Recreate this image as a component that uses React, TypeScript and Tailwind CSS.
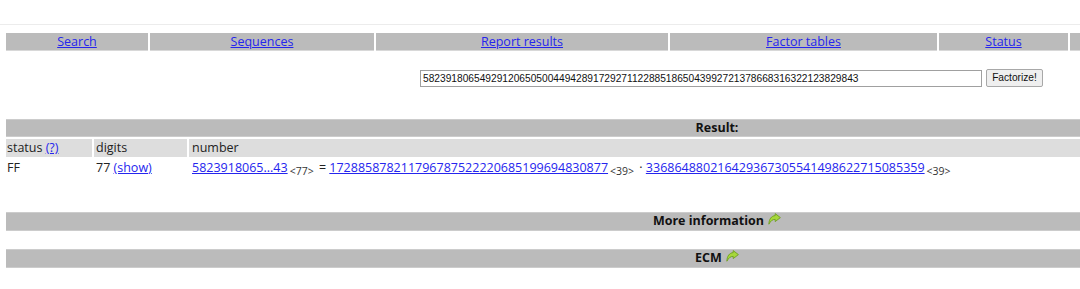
import React from "react";

const font = { fontFamily: '"Open Sans", "Noto Sans", sans-serif' };
const arial = { fontFamily: '"Liberation Sans", Arial, sans-serif' };

function Arrow() {
  return (
    <svg width="13" height="13" viewBox="0 0 13 13" className="inline-block ml-[4px] -mt-[4px] align-middle">
      <path
        d="M7.2 0.6 L12.4 4.6 L7.2 8.6 V6.4 C4.6 6.3 2.6 7.8 0.9 11.2 C0.9 6.2 3.4 2.9 7.2 2.6 Z"
        fill="#a6d83a"
        stroke="#6f9e22"
        strokeWidth="0.9"
        strokeLinejoin="round"
      />
    </svg>
  );
}

const navItems: [string, number][] = [
  ["Search", 142],
  ["Sequences", 224],
  ["Report results", 292],
  ["Factor tables", 267],
  ["Status", 129],
];

function Sub({ children }: { children: React.ReactNode }) {
  return <span className="text-[10.5px] relative top-[4px] text-[#333] mx-[2px]">{children}</span>;
}

export default function App() {
  return (
    <div className="w-[1080px] h-[289px] overflow-hidden bg-white" style={font}>
      <div className="w-[1434px]">
        <div className="h-[25px] border-b border-[#ececec]" />
        <div className="px-[6px] pt-[8px]">
          <div className="flex gap-[2px] h-[18px]">
            {navItems.map(([label, w]) => (
              <div
                key={label}
                className="bg-[#bbbbbb] border-b border-[#d8d8d8] flex items-center justify-center text-[12.5px] leading-[17px] shrink-0"
                style={{ width: w }}
              >
                <a href="#" className="text-[#2525ee] underline">
                  {label}
                </a>
              </div>
            ))}
            <div className="flex-1 bg-[#bbbbbb] border-b border-[#d8d8d8]" />
          </div>

          <div className="flex items-center pl-[414px] mt-[18px] gap-[4px]" style={arial}>
            <div className="w-[562px] h-[17px] border border-[#a0a0a0] bg-white text-[10.2px] leading-[15px] pl-[2px] text-[#111] overflow-hidden whitespace-nowrap">
              58239180654929120650500449428917292711228851865043992721378668316322123829843
            </div>
            <div className="w-[57px] h-[18px] border border-[#a8a8a8] rounded-[2px] bg-[#efefef] text-[10.2px] flex items-center justify-center text-[#111]">
              Factorize!
            </div>
          </div>

          <div className="mt-[32px] flex flex-col gap-[2px] text-[12.5px] text-[#222]">
            <div className="h-[18px] bg-[#bbbbbb] border-y border-[#cccccc] flex items-center justify-center font-bold text-[#111]">
              Result:
            </div>
            <div className="flex gap-[2px] h-[18px]">
              <div className="w-[86px] bg-[#dddddd] flex items-center pl-[1px]">
                status&nbsp;<a href="#" className="text-[#2525ee] underline">(?)</a>
              </div>
              <div className="w-[93px] bg-[#dddddd] flex items-center pl-[2px]">digits</div>
              <div className="flex-1 bg-[#dddddd] flex items-center pl-[3px]">number</div>
            </div>
            <div className="flex gap-[2px] h-[18px] whitespace-nowrap">
              <div className="w-[86px] flex items-center pl-[1px]">FF</div>
              <div className="w-[93px] flex items-center pl-[2px]">
                77&nbsp;<a href="#" className="text-[#2525ee] underline">(show)</a>
              </div>
              <div className="flex-1 flex items-center pl-[3px]">
                <a href="#" className="text-[#2525ee] underline">5823918065...43</a>
                <Sub>&lt;77&gt;</Sub>
                &nbsp;=&nbsp;
                <a href="#" className="text-[#2525ee] underline">172885878211796787522220685199694830877</a>
                <Sub>&lt;39&gt;</Sub>
                &nbsp;·&nbsp;
                <a href="#" className="text-[#2525ee] underline">336864880216429367305541498622715085359</a>
                <Sub>&lt;39&gt;</Sub>
              </div>
            </div>
          </div>

          <div className="mt-[35px] h-[19px] bg-[#bbbbbb] border-y border-[#cccccc] flex items-center justify-center font-bold text-[12.5px] text-[#111]">
            More information
            <Arrow />
          </div>
          <div className="mt-[18px] h-[19px] bg-[#bbbbbb] border-y border-[#cccccc] flex items-center justify-center font-bold text-[12.5px] text-[#111]">
            ECM
            <Arrow />
          </div>
        </div>
      </div>
    </div>
  );
}
